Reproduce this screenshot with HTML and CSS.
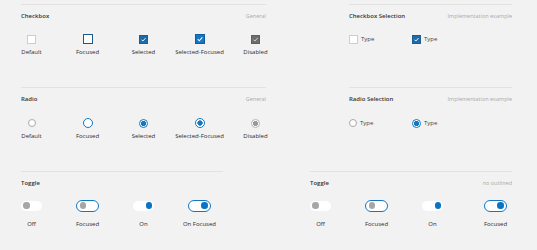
FILE: index.html
```html
<!DOCTYPE html>
<html lang="en">
<head>
  <meta charset="UTF-8">
  <title>Selection Controls</title>
  <link rel="stylesheet" href="styles.css">
</head>
<body>
  <div class="page">

    <!-- Checkbox -->
    <div class="band">
      <section class="panel panel-main">
        <header class="panel-head"><h2>Checkbox</h2><span class="meta">General</span></header>
        <div class="states">
          <div class="state"><div class="ctl"><span class="cb"></span></div><span class="label">Default</span></div>
          <div class="state"><div class="ctl"><span class="cb focused"></span></div><span class="label">Focused</span></div>
          <div class="state"><div class="ctl"><span class="cb checked"><svg viewBox="0 0 10 10"><path d="M2.2 5.3l1.9 1.9 3.8-4.2"/></svg></span></div><span class="label">Selected</span></div>
          <div class="state"><div class="ctl"><span class="cb checked focused"><svg viewBox="0 0 10 10"><path d="M2.2 5.3l1.9 1.9 3.8-4.2"/></svg></span></div><span class="label">Selected-Focused</span></div>
          <div class="state"><div class="ctl"><span class="cb disabled"><svg viewBox="0 0 10 10"><path d="M2.2 5.3l1.9 1.9 3.8-4.2"/></svg></span></div><span class="label">Disabled</span></div>
        </div>
      </section>
      <section class="panel panel-side">
        <header class="panel-head"><h2>Checkbox Selection</h2><span class="meta">Implementation example</span></header>
        <div class="choices">
          <div class="choice"><span class="cb"></span><span>Type</span></div>
          <div class="choice"><span class="cb checked"><svg viewBox="0 0 10 10"><path d="M2.2 5.3l1.9 1.9 3.8-4.2"/></svg></span><span>Type</span></div>
        </div>
      </section>
    </div>

    <!-- Radio -->
    <div class="band band-radio">
      <section class="panel panel-main">
        <header class="panel-head"><h2>Radio</h2><span class="meta">General</span></header>
        <div class="states">
          <div class="state"><div class="ctl"><span class="radio"></span></div><span class="label">Default</span></div>
          <div class="state"><div class="ctl"><span class="radio focused"></span></div><span class="label">Focused</span></div>
          <div class="state"><div class="ctl"><span class="radio checked"></span></div><span class="label">Selected</span></div>
          <div class="state"><div class="ctl"><span class="radio checked focused"></span></div><span class="label">Selected-Focused</span></div>
          <div class="state"><div class="ctl"><span class="radio disabled"></span></div><span class="label">Disabled</span></div>
        </div>
      </section>
      <section class="panel panel-side">
        <header class="panel-head"><h2>Radio Selection</h2><span class="meta">Implementation example</span></header>
        <div class="choices">
          <div class="choice"><span class="radio"></span><span>Type</span></div>
          <div class="choice"><span class="radio checked"></span><span>Type</span></div>
        </div>
      </section>
    </div>

    <!-- Toggle -->
    <div class="band band-toggle">
      <section class="panel panel-toggle">
        <header class="panel-head"><h2>Toggle</h2></header>
        <div class="states toggles">
          <div class="state"><div class="ctl"><span class="toggle"></span></div><span class="label">Off</span></div>
          <div class="state"><div class="ctl"><span class="toggle focused"></span></div><span class="label">Focused</span></div>
          <div class="state"><div class="ctl"><span class="toggle on"></span></div><span class="label">On</span></div>
          <div class="state"><div class="ctl"><span class="toggle on focused"></span></div><span class="label">On Focused</span></div>
        </div>
      </section>
      <section class="panel panel-toggle panel-toggle-side">
        <header class="panel-head"><h2>Toggle</h2><span class="meta">no outlined</span></header>
        <div class="states toggles toggles-side">
          <div class="state"><div class="ctl"><span class="toggle"></span></div><span class="label">Off</span></div>
          <div class="state"><div class="ctl"><span class="toggle focused"></span></div><span class="label">Focused</span></div>
          <div class="state"><div class="ctl"><span class="toggle on"></span></div><span class="label">On</span></div>
          <div class="state"><div class="ctl"><span class="toggle on focused"></span></div><span class="label">Focused</span></div>
        </div>
      </section>
    </div>

  </div>
</body>
</html>
```

FILE: styles.css
```css
:root {
  --bg: #f2f2f2;
  --rule: #e2e2e2;
  --text: #2a2a2a;
  --muted: #a9a9a9;
  --blue: #1477c2;
  --blue-dark: #1f5a86;
}
* { box-sizing: border-box; }
body {
  margin: 0;
  background: var(--bg);
  color: var(--text);
  font-family: 'Open Sans', 'Noto Sans', Arial, sans-serif;
}
.page {
  width: 537px;
  height: 250px;
  padding-top: 4px;
  overflow: hidden;
}
.band {
  display: flex;
  height: 83px;
}
.band-radio { height: 84px; }
.band-toggle { height: 79px; }

.panel {
  border-top: 1px solid var(--rule);
  padding-top: 6px;
}
.panel-main { margin-left: 21px; width: 245px; }
.panel-side { margin-left: 83px; width: 163px; }
.panel-toggle { margin-left: 21px; width: 202px; }
.panel-toggle-side { margin-left: 87px; }

.panel-head {
  display: flex;
  justify-content: space-between;
  align-items: center;
  height: 10px;
}
.panel-head h2 {
  margin: 0;
  font-size: 6px;
  font-weight: 600;
  color: #333;
}
.meta {
  font-size: 5.5px;
  color: var(--muted);
}

/* state rows */
.states {
  display: grid;
  grid-template-columns: repeat(5, 56px);
  margin: 13px 0 0 -17.5px;
}
.band-radio .states,
.band-radio .choices { margin-top: 14px; }
.state {
  display: flex;
  flex-direction: column;
  align-items: center;
  gap: 4px;
}
.ctl {
  height: 10px;
  display: flex;
  align-items: center;
  justify-content: center;
}
.label {
  font-size: 6px;
  line-height: 8px;
  color: var(--text);
  white-space: nowrap;
}
.toggles {
  grid-template-columns: repeat(4, 56px);
  margin-top: 11.5px;
}
.toggles .state { gap: 8.5px; }
.toggles .ctl { height: 12px; }
.toggles-side { grid-template-columns: 56px 56px 56px 70px; }

/* implementation rows */
.choices {
  display: flex;
  margin-top: 13px;
  height: 10px;
}
.choice {
  width: 63px;
  display: flex;
  align-items: center;
  gap: 3px;
  font-size: 6px;
  color: #444;
}

/* checkbox */
.cb {
  width: 9px;
  height: 9px;
  background: #fff;
  border: 1px solid #cdcdcd;
  display: flex;
}
.cb svg { width: 100%; height: 100%; }
.cb path {
  fill: none;
  stroke: #fff;
  stroke-width: 1.3;
}
.cb.focused {
  width: 10px;
  height: 10px;
  border: 1.5px solid var(--blue-dark);
}
.cb.checked {
  background: #1d6aa8;
  border-color: #1d5e92;
}
.cb.checked.focused {
  background: var(--blue);
  border: 1px solid #0f5f9e;
}
.cb.disabled {
  background: #6d6d6d;
  border-color: #606060;
}
.cb.disabled path { stroke: #ddd; }

/* radio */
.radio {
  width: 8px;
  height: 8px;
  border-radius: 50%;
  background: #fff;
  border: 1px solid #a9a9a9;
}
.radio.focused {
  width: 10px;
  height: 10px;
  border: 1.5px solid var(--blue);
}
.radio.checked {
  width: 9px;
  height: 9px;
  border: 1px solid var(--blue);
  background: radial-gradient(circle, var(--blue) 0 2.4px, #fff 2.9px);
}
.radio.checked.focused {
  width: 10px;
  height: 10px;
  border-width: 1.5px;
}
.radio.disabled {
  width: 9px;
  height: 9px;
  border: 1px solid #b5b5b5;
  background: radial-gradient(circle, #9a9a9a 0 2.3px, #fff 2.8px);
}

/* toggle */
.toggle {
  width: 21px;
  height: 10px;
  border-radius: 5px;
  background: #fff;
  display: flex;
  align-items: center;
  padding: 0 2px;
}
.toggle::after {
  content: "";
  width: 6.5px;
  height: 6.5px;
  border-radius: 50%;
  background: #a6a6a6;
}
.toggle.focused {
  width: 23px;
  height: 12px;
  border-radius: 6px;
  border: 1.5px solid var(--blue);
  padding: 0 2.5px;
}
.toggle.on { justify-content: flex-end; }
.toggle.on::after { background: #0a74c4; }
```
